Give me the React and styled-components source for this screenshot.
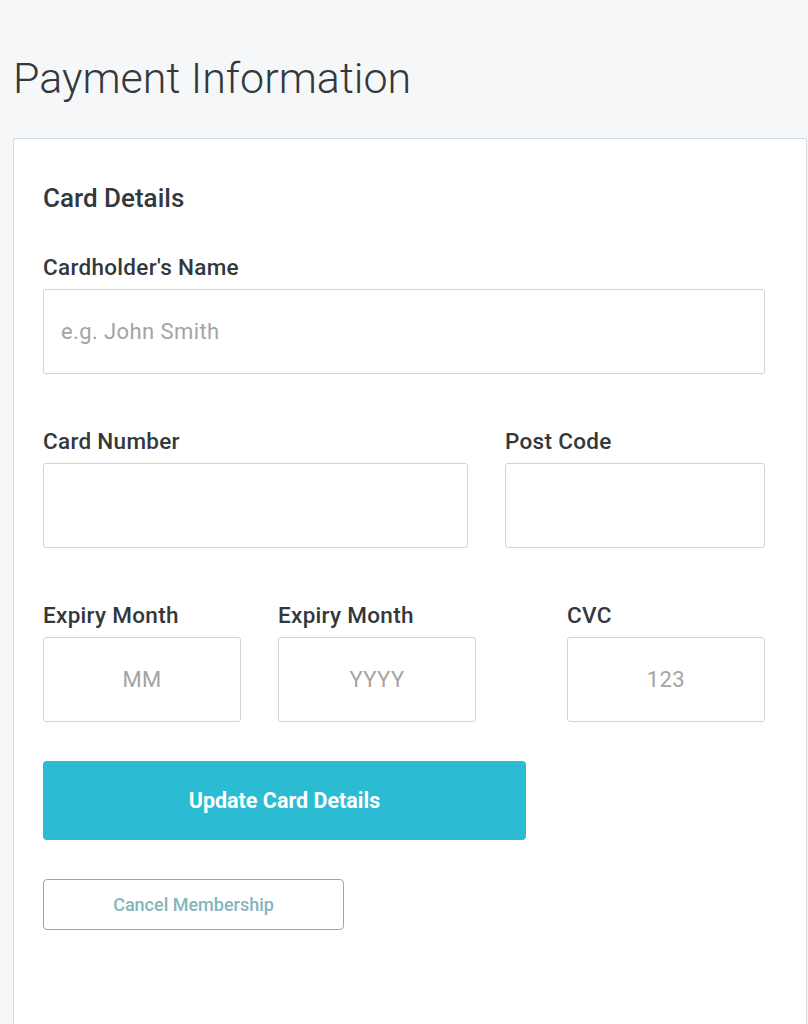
import React from 'react';
import styled, { createGlobalStyle } from 'styled-components';

const GlobalStyle = createGlobalStyle`
  html, body {
    margin: 0;
    padding: 0;
    background: #f6f7f9;
    font-family: Roboto, "Liberation Sans", sans-serif;
    color: #33383d;
  }
  * {
    box-sizing: border-box;
  }
`;

function App() {
  return (
    <>
      <GlobalStyle />
      <Page>
        <Title>Payment Information</Title>
        <Card>
          <SectionTitle>Card Details</SectionTitle>

          <Field>
            <Label>Cardholder's Name</Label>
            <Input placeholder="e.g. John Smith" />
          </Field>

          <Row>
            <Field>
              <Label>Card Number</Label>
              <Input />
            </Field>
            <Field>
              <Label>Post Code</Label>
              <Input />
            </Field>
          </Row>

          <ExpiryRow>
            <Field small>
              <Label>Expiry Month</Label>
              <Input center placeholder="MM" />
            </Field>
            <Field small>
              <Label>Expiry Month</Label>
              <Input center placeholder="YYYY" />
            </Field>
            <Field small push>
              <Label>CVC</Label>
              <Input center placeholder="123" />
            </Field>
          </ExpiryRow>

          <PrimaryButton type="button">Update Card Details</PrimaryButton>
          <OutlineButton type="button">Cancel Membership</OutlineButton>
        </Card>
      </Page>
    </>
  );
}

export default App;

const Page = styled.div`
  padding: 52px 1px 0 13px;
`;

const Title = styled.h1`
  margin: 0 0 34px;
  font-size: 43px;
  font-weight: 300;
  line-height: 52px;
  color: #33383d;
`;

const Card = styled.div`
  min-height: 900px;
  padding: 43px 41px 60px 29px;
  background: #fff;
  border: 1px solid #d3dbe0;
  border-radius: 2px;
`;

const SectionTitle = styled.h2`
  margin: 0 0 41px;
  font-size: 26px;
  font-weight: 500;
  line-height: 32px;
  color: #33383d;
`;

const Field = styled.div`
  display: flex;
  flex-direction: column;
  margin-bottom: 55px;
  width: ${({ small }) => (small ? '198px' : 'auto')};
  margin-left: ${({ push }) => (push ? 'auto' : '0')};
`;

const Label = styled.label`
  margin-bottom: 10px;
  font-size: 22.5px;
  font-weight: 500;
  line-height: 24px;
  letter-spacing: 0.3px;
  color: #33383d;
`;

const Input = styled.input`
  width: 100%;
  height: 85px;
  padding: 0 17px;
  border: 1px solid #cdd5db;
  border-radius: 3px;
  background: #fff;
  font-family: Roboto, "Liberation Sans", sans-serif;
  font-size: 22px;
  letter-spacing: 0.4px;
  color: #33383d;
  text-align: ${({ center }) => (center ? 'center' : 'left')};
  outline: none;

  &::placeholder {
    color: #a4a4a4;
  }
`;

const Row = styled.div`
  display: grid;
  grid-template-columns: 1fr 260px;
  column-gap: 37px;
`;

const ExpiryRow = styled.div`
  display: flex;
  gap: 37px;
  margin-bottom: -16px;
`;

const PrimaryButton = styled.button`
  display: block;
  width: 483px;
  height: 79px;
  margin-bottom: 39px;
  border: none;
  border-radius: 4px;
  background: #2bbbd3;
  font-family: Roboto, "Liberation Sans", sans-serif;
  font-size: 21.5px;
  font-weight: 700;
  color: #fff;
  cursor: pointer;
`;

const OutlineButton = styled.button`
  display: block;
  width: 301px;
  height: 51px;
  border: 1.5px solid #7fb3bc;
  border-radius: 4px;
  background: #fff;
  font-family: Roboto, "Liberation Sans", sans-serif;
  font-size: 18px;
  font-weight: 500;
  color: #84b5bd;
  cursor: pointer;
`;
